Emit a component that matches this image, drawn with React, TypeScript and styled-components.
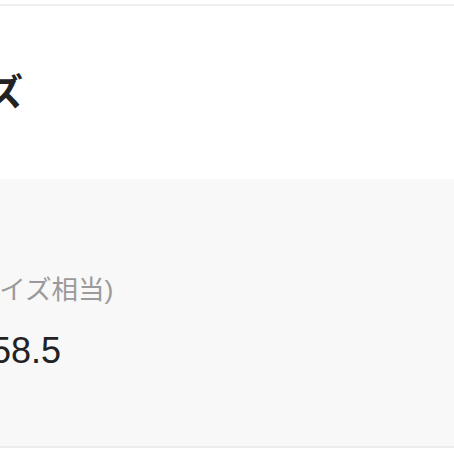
import React from 'react';
import styled, { createGlobalStyle } from 'styled-components';

const GlobalStyle = createGlobalStyle`
  html, body {
    margin: 0;
    padding: 0;
    background: #ffffff;
  }
  body {
    font-family: "Liberation Sans", "Noto Sans CJK JP", sans-serif;
    overflow: hidden;
  }
`;

const Page = styled.div`
  width: 454px;
  height: 454px;
  overflow: hidden;
  padding-top: 4px;
  box-sizing: border-box;
`;

const HeaderBlock = styled.header`
  border-top: 2px solid #efefef;
  height: 175px;
  display: flex;
  align-items: center;
  padding-bottom: 6px;
  box-sizing: border-box;
`;

const Title = styled.h2<{ shift: number }>`
  margin: 0 0 0 ${(p) => p.shift}px;
  font-size: 37px;
  font-weight: 700;
  color: #222222;
  white-space: nowrap;
  letter-spacing: 0;
`;

const Panel = styled.section`
  background: #f8f8f8;
  height: 269px;
  border-bottom: 2px solid #ececec;
  box-sizing: border-box;
  padding-top: 95px;
  display: flex;
  flex-direction: column;
`;

const Label = styled.div<{ shift: number }>`
  margin-left: ${(p) => p.shift}px;
  font-size: 26.5px;
  color: #9a9a9a;
  white-space: nowrap;
  line-height: 32px;
`;

const Value = styled.div<{ shift: number }>`
  margin-left: ${(p) => p.shift}px;
  margin-top: 25px;
  font-size: 36px;
  color: #222222;
  white-space: nowrap;
  line-height: 40px;
`;

const App = () => {
  return (
    <Page>
      <GlobalStyle />
      <HeaderBlock>
        <Title shift={-87}>サイズ</Title>
      </HeaderBlock>
      <Panel>
        <Label shift={-89}>(日本サイズ相当)</Label>
        <Value shift={-9}>58.5</Value>
      </Panel>
    </Page>
  );
};

export default App;
